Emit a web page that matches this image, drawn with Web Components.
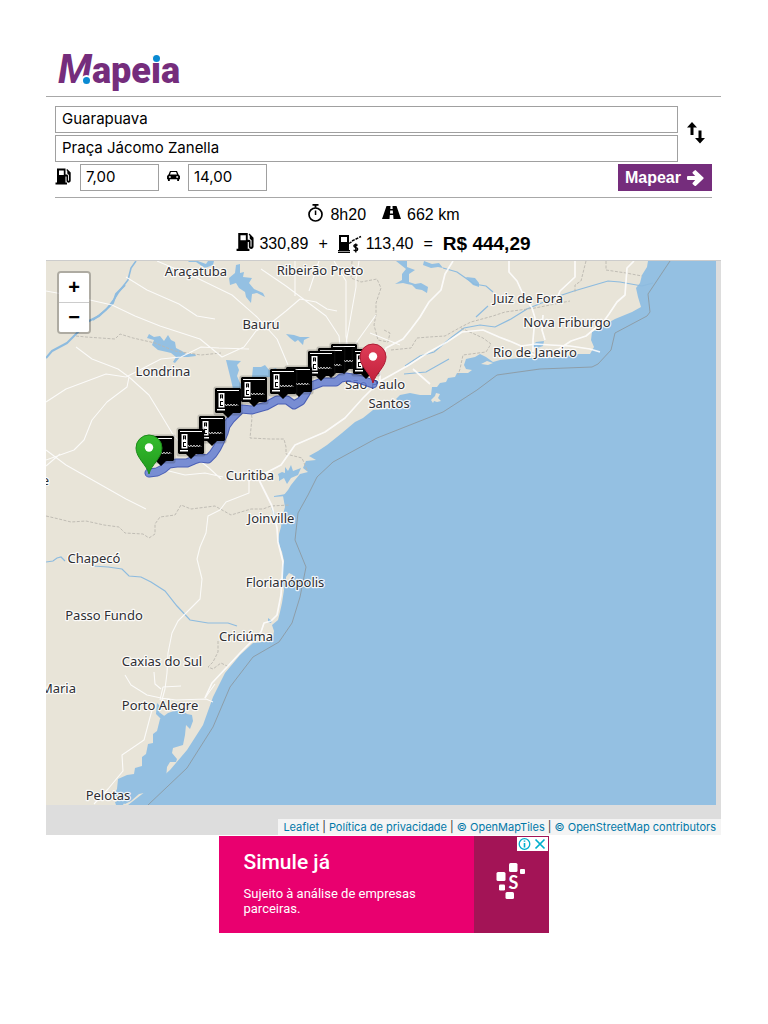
<!DOCTYPE html>
<html lang="pt-BR">
<head>
<meta charset="utf-8">
<meta name="viewport" content="width=device-width, initial-scale=1">
<title>Mapeia</title>
<style>
  body { margin: 0; background: #fff; color: #000; font-family: "Liberation Sans", Arial, sans-serif; }
</style>
</head>
<body>
<mapeia-app></mapeia-app>

<template id="t-app">
  <style>
    :host { display: block; padding: 0 47px 0 46px; }
    .ad { display: flex; justify-content: center; padding: 1px 0 24px; }
  </style>
  <site-header></site-header>
  <main>
    <route-form></route-form>
    <route-summary></route-summary>
    <route-map></route-map>
  </main>
  <div class="ad"><ad-banner>
    <span slot="title">Simule já</span>
    <span slot="text">Sujeito à análise de empresas parceiras.</span>
  </ad-banner></div>
</template>

<template id="t-header">
  <style>
    :host { display: block; border-bottom: 1px solid #a8a8a8; padding: 46px 0 0 12px; height: 50px; }
    a { display: inline-flex; align-items: baseline; color: #752d7c; text-decoration: none;
        font: 900 36px/48px Roboto, sans-serif; }
    .m { position: relative; font-size: 40px; font-style: italic; font-weight: 700; }
    .i { position: relative; }
    .i::after, .m::after { content: ""; position: absolute; border-radius: 50%; background: #0a8ad2; width: 7px; height: 7px; }
    .i::after { left: 2px; top: 8px; box-shadow: 0 0 0 1px #fff; }
    .m::after { right: 2px; bottom: 10px; box-shadow: 0 0 0 2px #fff; }
  </style>
  <a href="#"><span class="m">M</span><span>ape</span><span class="i">i</span><span>a</span></a>
</template>

<template id="t-form">
  <style>
    :host { display: block; padding: 9px 9px 0; }
    form { border-bottom: 1px solid #a8a8a8; padding-bottom: 6px; display: grid; gap: 2px; }
    .places { display: grid; grid-template-columns: 1fr 34px; }
    .fields { display: grid; gap: 2px; }
    input { box-sizing: border-box; width: 100%; height: 27px; margin: 0; padding: 0 6px 2px; border: 1px solid #a0a0a0;
            border-radius: 0; background: #fff; color: #000; font: 15px/25px Inter, sans-serif; outline: 0; }
    .swap { border: 0; background: none; padding: 0 0 2px 2px; display: grid; place-items: center; }
    .row { display: flex; align-items: center; }
    .row label { display: flex; align-items: center; }
    .row label:nth-of-type(1) app-icon { margin: 0 8px 3px 0; }
    .row label:nth-of-type(2) app-icon { margin: 0 8px 3px; }
    .row input { width: 79px; padding: 0 5px 2px; }
    .go { margin-left: auto; height: 27px; padding: 0 7px; border: 0; background: #752d7c; color: #fff; display: flex;
          align-items: center; gap: 6px; font: bold 16px/27px "Liberation Sans", sans-serif; }
  </style>
  <form onsubmit="return false">
    <div class="places">
      <div class="fields">
        <input aria-label="Origem" value="Guarapuava">
        <input aria-label="Destino" value="Praça Jácomo Zanella">
      </div>
      <button class="swap" type="button" aria-label="Inverter"><app-icon name="swap"></app-icon></button>
    </div>
    <div class="row">
      <label><app-icon name="fuel"></app-icon><input aria-label="Preço do combustível" value="7,00"></label>
      <label><app-icon name="car"></app-icon><input aria-label="Consumo" value="14,00"></label>
      <button class="go">Mapear <app-icon name="arrow"></app-icon></button>
    </div>
  </form>
</template>

<template id="t-summary">
  <style>
    :host { display: block; padding: 2px 0; font-size: 16px; line-height: 29px; }
    div { display: flex; justify-content: center; align-items: center; height: 29px; white-space: nowrap; }
    app-icon { margin: 0 6px 4px 0; }
    .dist { margin-left: 16px; }
    .op { margin: 0 10px; }
    .cost app-icon { margin-right: 4px; }
    .cost app-icon[name="toll"] { margin-bottom: 0; }
    strong { font-size: 19px; }
    .line { display: flex; align-items: center; }
  </style>
  <div><span class="line"><app-icon name="clock"></app-icon>8h20</span><span class="line dist"><app-icon name="road"></app-icon>662 km</span></div>
  <div class="cost"><span class="line"><app-icon name="fuel-big"></app-icon>330,89</span><span class="op">+</span><span class="line"><app-icon name="toll"></app-icon>113,40</span><span class="op">=</span><strong>R$ 444,29</strong></div>
</template>

<template id="t-map">
  <style>
    :host { display: block; position: relative; background: #ddd; border-top: 1px solid #ccc; padding: 0 5px 30px 0; overflow: hidden; }
    svg { display: block; width: 100%; height: auto; background: #94c0e2; }
    .zoom { position: absolute; left: 11px; top: 10px; border: 2px solid rgba(0,0,0,.25); border-radius: 4px; background-clip: padding-box; }
    .zoom button { display: block; width: 30px; height: 29px; padding: 0; border: 0; background: #fff; color: #000;
                   font: bold 20px/27px "Liberation Sans", sans-serif; border-radius: 0 0 2px 2px; }
    .zoom button:first-child { border-bottom: 1px solid #ccc; border-radius: 2px 2px 0 0; height: 30px; }
    footer { position: absolute; right: 0; bottom: 0; padding: 0 5px; background: #f4f4f4; color: #333; font: 11px/16px Inter, sans-serif; white-space: nowrap; }
    a { color: #0078a8; text-decoration: none; }
    .land { fill: #e8e4d8; }
    .water { fill: #94c0e2; }
    .river { fill: none; stroke: #8dbbdf; stroke-width: 1.6; }
    .road { fill: none; stroke: #fff; stroke-width: 1.1; opacity: .85; stroke-linejoin: round; }
    .main { stroke-width: 1.7; }
    .state { fill: none; stroke: #bbb8b0; stroke-width: .9; stroke-dasharray: 3 1.5; }
    .sea { fill: none; stroke: #8c9499; stroke-width: .8; }
    .lake { fill: none; stroke: #8dbbdf; stroke-linejoin: bevel; stroke-width: 2; }
    .route { fill: none; stroke-linejoin: round; stroke-linecap: round; }
    .labels text { font: 13px "Noto Sans", sans-serif; fill: #2e2e33; stroke: #fff; stroke-width: 2.4px; stroke-opacity: .85; paint-order: stroke; stroke-linejoin: round; }
    .labels .m { text-anchor: middle; }
    .labels .e { text-anchor: end; }
  </style>
  <svg viewBox="46 261 670 544" role="img" aria-label="Mapa da rota">
    <defs>
      <symbol id="toll" viewBox="-3 -3 33 37" overflow="visible">
        <rect x="-1.500" y="-1.500" width="29" height="29" rx="2" fill="#333" opacity=".22"/>
        <path d="M1 0h24l1 1v23l-1 1h-7l-5 5-5-5H1l-1-1V1z" fill="#000"/>
        <path d="M2 2h22v1H2zM2 21h8v1.500H2z" fill="#fff"/>
        <path d="M3.500 5h6v14.500H3.500z" fill="#fff"/>
        <path d="M5 6.500h3v4H7v-1H6v1H5zM5 13h3v1H6v3h2v1H5z" fill="#000"/>
        <path d="M6 7.500h1v1H6z" fill="#fff"/>
        <path d="M10 16.500l1.500 1 1.500-1 1.500 1 1.500-1 1.500 1 1.500-1 1.500 1 1.500-1 1 1" fill="none" stroke="#fff" stroke-width="1"/>
      </symbol>
      <linearGradient id="gg" x2="0" y2="1"><stop stop-color="#35bd2e"/><stop offset="1" stop-color="#219a1d"/></linearGradient>
      <linearGradient id="gr" x2="0" y2="1"><stop stop-color="#df3e58"/><stop offset="1" stop-color="#c11f3b"/></linearGradient>
    </defs>
    <path class="land" d="M46 261H648L647 267 642 275 640 283 636 288 638 297 641 307 632 312 615 319 606 324 600 328 592 332 591 340 594 347 590 354 577 354 562 357 547 358 520 358 500 360 493 362 486 357 480 354 475 357 466 359 464 365 466 369 472 370 468 373 457 373 455 377 448 378 446 382 440 383 437 387 432 387 431 395 420 395 410 393 400 395 396 399 404 405 385 409 373 410 363 418 355 422 342 433 327 445 318 451 309 456 316 460 306 461 303 468 308 472 300 474 295 480 291 485 288 490 283 496 285 507 282 518 281 527 279 534 278 542 282 552 284 561 282 568 283 583 284 590 282 603 280 612 278 620 272 625 274 631 273 638 270 641 253 643 240 655 225 673 213 697 203 725 187 750 170 770 150 788 128 805H46z"/>
    <path class="land" d="M431 400l4-4 1-3 4 1-2 4 3 3-4 1-3-1-1 2zM481 364l6-3 6 2-5 2zM286 577l3-4 4 2-1 6-3 4-3-1z"/>
    <path class="water" d="M157 703l4 4-2 5 8 6 8 4 0 2-5 1-6-2-4-5-4-4zM187 714l5 1 1 6-3 8-4-4-1 10-2 10-10 3-1 5 5 6-1 3-6 0-3 5-1 12-9 9-8 4-10 2-8 7-6 3-7-4-3-7 2-4 1-10 9-4 7-1 1-6 7-2 0-9 4-3 2-10 5-1 0-9 4-3 3-12 8-6 12-4zM115 802l5-2 5 1-2 4h-7zM532 346l4-4 8-1-1 5-6 2zM268 618l4 3-1 2-3-1zM271 507l3 5 3 6-3-1zM274 496l12-2v2l-12 1zM278 474l4-2 3 1 0-6 3 4 3-6 2 6 8-3-3 7-7 3-4 6-3-6-5 3 0-4z"/>
    <g class="water">
      <path d="M149 334l5 3 6-1 4 5 4-6 3 5 4 2 1 6 6 3 4 3 9 0 1 2-8 1-8 0-5 6-2-1 3-5-5-4-4-1-9-2-6-5 2-5-7-2zM226 360l15 1-4 4 2 5-2 6 3 7 5 4-6 1-2 5-4-4-2-9-2-8-1-4zM253 367l8 0 4-2 4 5 7-2 3 5-4 4-8 0-6 0-6 5-3-5zM286 334l8 1 6 2 10 0-6 3-1 5-5-5-3 2-5-4zM229 278l6-5 1-8 4-1 0 9 4-1-1 5 9 1-3 5 5 6 9 4 2 4-8-4-5 1-1 9-5-6-1-5-6-4-3-5-6 2zM188 262l8 0 9 6 8-3 1-4h-6l-2 3-8-3h-9z"/>
      <path d="M396 261l11 0 0 6 8 3-6 4 0 8 6 2 6-1 7 4-1 6-5-3-6-1-4-4-5-1-4-1-8 1 7-4 0-6 4-5zM424 261l8 3 7-1 4 5-5-1-7 1-8-3zM466 277l9 1 4 5 0 4-6-2-4-4z"/>
    </g>
    <path class="river" d="M136 261l-5 7-3 12-10 13-3 5-9 12-13 10"/>
    <path class="lake" d="M125 285l-9 9-3 9-14 13-10 5-22 22-15 8-6 7"/>
    <path class="river" d="M46 562l7-1 4-3 4-1 4 4M93 566l15 1 14 2 7 7 12 1 10 5 14 9 12 15 13 14 18 3 20 0 9 3M443 268l14 4 10 7 7 5 12 2 7 6M488 306l-12 11M405 366l15-10 14-4 18-15 12-9 16-3 15 2 16-8 16-10 29-12 18-6 17-5 17-5 12 1 22 4 11-3M404 374l22-2 23-13" style="stroke-width:1.200"/>
    <path class="state" d="M76 336l10 1 29 2 5-5 13 4 22 5 20 8 26 4 20-2M250 406l2 12-2 20 20 1 14 0 2 8 0 7 16 4 5 12M46 516l13 3 12 3 15-1 18 4 15 2 6 6 18 1 6 4 6-4 0-10 5-7 15-2 6-10 10 4 24-3 16 9 20-6 12 0 8-3 18-1M218 641l0 11-5 10-5 5 5 2 8-6 8 4M352 261l-1 17 10 4 16-3 4 9-5 15 0 12-2 10 4 15 10 2 2-9-6-3M391 350l20-2 6-10 12-1 16-1 16-9 10-5 22-6 12-4 30-4 35-7M461 328l22 10 8 6-5 8-23 3-3 14-2 6M586 261l-5 20-6 4 0 8M606 261l0 9 20 3 16 3"/>
    <g class="road">
      <path d="M453 261l-8 13-4 16-12 12-9 15-9 12-8 10-17 9-5 15-1 12 0 5M509 261v11l8 9 5 11 10 16 3 10-2 22 0 12M575 261l0 16-15 14-4 10M634 261l-7 7-2 27-8 7-8 12-5 7-18 15-15 5-12 8-20 8-12-5" class="main"/>
      <path class="main" d="M373 385l20-11 16-9 20-13 18-10 15-10 21-2 16 7 13 5 9 4 15-2 14 1 20 1 20 3 10 3M413 369l17 15M545 340l-3-10 1-15"/>
      <path d="M157 261l40 17 35 17 25 22 20 22 11 26M46 291l22 4 44 10 23 11 25 10 40 13 22 18 22-10 12-16 15-8 5-4 10-8 14-12 16 3 11 7 10 2M261 269l25 17 40 30 13 20 1 10M334 261l12 20 0 55 4 25M359 261l-3 18 0 8-8 45-4 24M126 277l21 13 32 14 18 12 18 3M295 261l0 35M319 261l-10 30M376 315l-20 28-6 16M46 450l20 15 60 34 20 10M76 347l16 12 26 10 11 8-2 10-20 15-15 18-8 20-10 10-28 10M129 377l20 18 11 18 12 20 12 15 25 20 12 11M126 377l35-18 20-2 20-10 18 1 30 1M165 470l20 5 20-2 18 4M46 402l20-13 40-15 20 3M400 345l-30-12M46 466l14-12"/>
      <path class="main" d="M258 478l4 8 5 10 5 10 5 22 1 14 5 20-1 18-1 15-4 20-6 6-7 2-3 9-20 20-14 15-15 16-7 15M373 388l-10 10-18 20-20 14-30 13-14 20-23 12"/>
      <path d="M249 479v14l-23 9-6 8-12 6-2 17-6 14-3 12 5 20-2 20-22 22-6 12-4 20-1 20-2 16-6 22M125 675l6 10 16 10 14 3 15 2 30-1 7 3M160 700l3-13 18-1M154 672l1 12 6 5M152 710l-8 30-22 15 1 16-15 18-14 15M205 698l10-14"/>
    </g>
    <path class="sea" d="M670 261L648 294 650 312 647 316 615 333 611 350 598 364 592 367 540 369 497 375 477 390 443 412 377 438 333 462 317 477 308 495 298 513 295 540 306 567 300 597 292 623 279 642 253 657 230 687 213 727 187 768 148 805"/>
    <g class="labels">
      <text class="m" x="196" y="276">Araçatuba</text>
      <text class="m" x="320" y="275">Ribeirão Preto</text>
      <text class="m" x="261" y="329">Bauru</text>
      <text class="m" x="163" y="376">Londrina</text>
      <text class="m" x="528" y="303">Juiz de Fora</text>
      <text class="m" x="567" y="327">Nova Friburgo</text>
      <text class="m" x="535" y="357">Rio de Janeiro</text>
      <text class="m" x="375" y="389">São Paulo</text>
      <text class="m" x="389" y="408">Santos</text>
      <text class="m" x="250" y="480">Curitiba</text>
      <text class="m" x="271" y="523">Joinville</text>
      <text class="m" x="94" y="563">Chapecó</text>
      <text class="m" x="285" y="587">Florianópolis</text>
      <text class="m" x="104" y="620">Passo Fundo</text>
      <text class="m" x="246" y="641">Criciúma</text>
      <text class="m" x="162" y="666">Caxias do Sul</text>
      <text class="e" x="76" y="693">Maria</text>
      <text class="m" x="160" y="710">Porto Alegre</text>
      <text class="m" x="108" y="800">Pelotas</text>
      <text class="e" x="49" y="485">e</text>
    </g>
    <g class="route" opacity=".85">
      <path id="path" d="M149 473l8-1 6-3 6-5 8-1 10 0 7-3 6-2 8 1 5-5 4-6 3-6 4-9 2-7 5-7 10-10 11 1 14-4 11-6 10 0 7 5 7-4 5-8 3-6 13-5 14 0 5-4 5-1 13 2 14 5" stroke="#3049b0" stroke-width="9"/>
      <path d="M149 473l8-1 6-3 6-5 8-1 10 0 7-3 6-2 8 1 5-5 4-6 3-6 4-9 2-7 5-7 10-10 11 1 14-4 11-6 10 0 7 5 7-4 5-8 3-6 13-5 14 0 5-4 5-1 13 2 14 5" stroke="#657fd3" stroke-width="7"/>
    </g>
    <g id="tolls"></g>
    <path d="M149 474c-2-9-13-16-13-26a13 13 0 0 1 26 0c0 10-11 17-13 26z" fill="url(#gg)" stroke="#1d8a1a" stroke-width="1"/>
    <circle cx="149" cy="447.500" r="4.200" fill="#fff"/>
    <path d="M373 383c-2-9-13-16-13-26a13 13 0 0 1 26 0c0 10-11 17-13 26z" fill="url(#gr)" stroke="#ad1c34" stroke-width="1"/>
    <circle cx="373" cy="356.500" r="4.200" fill="#fff"/>
  </svg>
  <div class="zoom"><button aria-label="Aproximar">+</button><button aria-label="Afastar">−</button></div>
  <footer><a href="#">Leaflet</a> | <a href="#">Política de privacidade</a> | <a href="#">© OpenMapTiles</a> | <a href="#">© OpenStreetMap contributors</a></footer>
</template>

<template id="t-ad">
  <style>
    :host { display: flex; position: relative; width: 330px; height: 97px; background: #e9006f; color: #fff; font-family: Roboto, sans-serif; }
    .copy { flex: 1; padding: 14px 40px 0 25px; }
    h2 { margin: 0 0 12px; font-size: 21px; line-height: 24px; font-weight: 500; }
    p { margin: 0; font-size: 13px; line-height: 15px; }
    .brand { width: 75px; background: #a31456; }
    .brand svg { display: block; }
    .choices { position: absolute; top: 1px; right: 1px; width: 31px; height: 14px; background: #fff; }
  </style>
  <div class="copy"><h2><slot name="title"></slot></h2><p><slot name="text"></slot></p></div>
  <div class="brand">
    <svg width="75" height="97" viewBox="0 0 75 97">
      <g fill="#fff"><rect x="35" y="27" width="8.500" height="9" rx="1.500"/><rect x="46" y="33" width="5" height="5" rx="1"/><rect x="22.500" y="36" width="9" height="9" rx="1.500"/><rect x="25" y="48.500" width="6" height="6" rx="1.200"/><rect x="31.500" y="56" width="8.500" height="7" rx="1.500"/>
      <text x="34.500" y="53" font-family="Lato, sans-serif" font-weight="700" font-size="18">S</text></g>
    </svg>
  </div>
  <svg class="choices" viewBox="0 0 31 14"><g fill="none" stroke="#00aecd" stroke-width="1.300"><circle cx="7.500" cy="7" r="5.300"/><path d="M7.500 6v4.500M7.500 3.500v1.300" stroke-width="1.600"/><path d="M18.500 2.500l9 9M27.500 2.500l-9 9" stroke-width="1.700"/></g></svg>
</template>

<script>
  const fuel = '<path d="M2 0h8.500v6h1.200c1 0 1.300.7 1.300 1.500v4.200c0 .8.900.8.900 0V6.500L12.300 5V2.500l-1-1 .8-1 3.600 3.600v8c0 2.800-4.200 2.800-4.200 0V8h-1v6H12v2H.500v-2H2zM4 2v4.500h4.800V2z"/>';
  const icons = {
    fuel: [17, 17, '0 0 17 16', fuel],
    'fuel-big': [19, 18, '0 0 17 16', fuel],
    car: [13, 12, '0 0 14 13', '<path d="M3.200 1h7.600l1.600 4L14 6.500V10h-1v2h-2v-2H3v2H1v-2H0V6.500L1.600 5zM4.200 2.300L3.200 5h7.600l-1-2.700zM2 6.800v1.600h2V6.800zm8 0v1.600h2V6.800z"/>'],
    swap: [18, 22, '0 0 18 22', '<path d="M3.500 13V5.500H0L5 0l5 5.500H6.500V13zM11.500 8.500h3V16H18l-5 5.500L8 16h3.500z"/>'],
    arrow: [18, 16, '0 0 18 16', '<path d="M1 6h7.200L5.800 3.400a1 1 0 0 1 0-1.400L7.600.4a1 1 0 0 1 1.400 0l7.400 7a1 1 0 0 1 0 1.300l-7.400 7a1 1 0 0 1-1.400 0L5.800 14.200a1 1 0 0 1 0-1.400L8.200 10H1a1 1 0 0 1-1-1V7a1 1 0 0 1 1-1z" fill="#fff"/>'],
    clock: [17, 18, '0 0 17 18', '<circle cx="8.500" cy="10.500" r="6.500" fill="none" stroke="#000" stroke-width="1.700"/><path d="M5.500 0h6v1.800H9.400v2H7.600v-2H5.500zM7.800 6.500h1.500V11H7.800z"/>'],
    road: [19, 13, '0 0 19 13', '<path d="M4.500 0H8.500L8.300 3h2.400L10.500 0h4L19 13h-7.500L11.200 9H7.800l-.3 4H0zM8.200 4.500L8 7.500h3l-.2-3z"/>'],
    toll: [24, 20, '0 0 24 20', '<path d="M1 1h10v15h1v3H0v-3h1zM3 3v5h6V3z"/><path d="M0 17.500h12" stroke="#fff" stroke-width=".6"/><path d="M11 9.500l3-2M14 7l9-4.500" fill="none" stroke="#000" stroke-width="1.500" stroke-dasharray="3 1"/><path d="M19.500 11.500c-1-1.300-4-1-3.500.8s3.700.8 3.700 2.800-3.300 2.200-4 .6M17.800 9.500v9" fill="none" stroke="#000" stroke-width="1.400"/>']
  };

  const define = (tag, id, setup) => customElements.define(tag, class extends HTMLElement {
    constructor() {
      super();
      this.attachShadow({ mode: 'open' }).append(document.getElementById(id).content.cloneNode(true));
      if (setup) setup(this.shadowRoot);
    }
  });

  customElements.define('app-icon', class extends HTMLElement {
    connectedCallback() {
      const [w, h, box, body] = icons[this.getAttribute('name')];
      const root = this.shadowRoot || this.attachShadow({ mode: 'open' });
      root.innerHTML = `<style>:host{display:inline-block;flex:none}svg{display:block}</style>
        <svg width="${w}" height="${h}" viewBox="${box}" fill-rule="evenodd" aria-hidden="true">${body}</svg>`;
    }
  });

  // Toll plazas from north to south, so that southern markers overlap northern ones.
  const tolls = [[331, 344], [318, 348], [353, 349], [308, 351], [286, 367], [270, 369], [241, 377], [215, 388], [199, 416], [178, 429], [148, 436]];
  define('route-map', 't-map', root => {
    root.getElementById('tolls').innerHTML = tolls.map(([x, y]) =>
      `<use href="#toll" x="${x - 3}" y="${y - 3}" width="33" height="37"/>`).join('');
  });
  define('site-header', 't-header');
  define('route-form', 't-form');
  define('route-summary', 't-summary');
  define('ad-banner', 't-ad');
  define('mapeia-app', 't-app');
</script>
</body>
</html>
